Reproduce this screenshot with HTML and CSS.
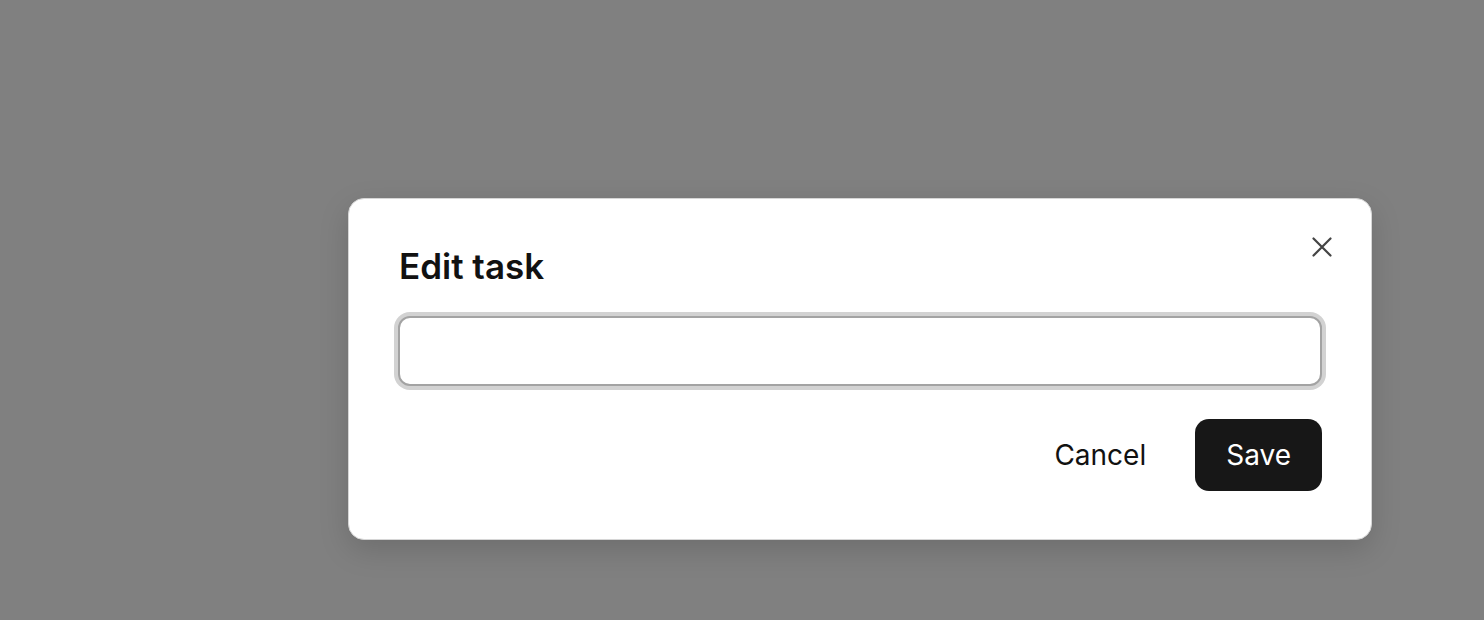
FILE: index.html
```html
<!DOCTYPE html>
<html>
<head>
<meta charset="utf-8">
<link rel="stylesheet" href="styles.css">
</head>
<body>
<div class="backdrop">
  <div class="dialog">
    <button class="close" aria-label="Close">
      <svg width="20" height="20" viewBox="0 0 20 20" fill="none" stroke="#444" stroke-width="2.2" stroke-linecap="round"><path d="M1.5 1.5 L18.5 18.5 M18.5 1.5 L1.5 18.5"/></svg>
    </button>
    <h2 class="title">Edit task</h2>
    <input class="field" type="text">
    <div class="actions">
      <button class="btn btn-ghost">Cancel</button>
      <button class="btn btn-primary">Save</button>
    </div>
  </div>
</div>
</body>
</html>
```
FILE: styles.css
```css
html, body {
  margin: 0;
  height: 100%;
}
body {
  background: #808080;
  font-family: Inter, "Liberation Sans", sans-serif;
}
.backdrop {
  height: 100%;
  display: flex;
  padding-left: 348px;
  padding-top: 198px;
  box-sizing: border-box;
}
.dialog {
  position: relative;
  width: 1024px;
  height: 342px;
  box-sizing: border-box;
  background: #fff;
  border: 1px solid #d6d6d6;
  border-radius: 16px;
  padding: 47px 49px 48px;
  box-shadow: 0 10px 30px rgba(0,0,0,0.15);
  display: flex;
  flex-direction: column;
}
.close {
  position: absolute;
  top: 38px;
  right: 39px;
  width: 20px;
  height: 20px;
  padding: 0;
  border: 0;
  background: none;
  display: flex;
}
.title {
  margin: 0 0 30px 1px;
  font-size: 35px;
  font-weight: 600;
  line-height: 40px;
  color: #111;
}
.field {
  box-sizing: border-box;
  width: 924px;
  height: 70px;
  border: 2px solid #a3a3a3;
  border-radius: 12px;
  box-shadow: 0 0 0 4px #d2d2d2;
  outline: none;
  font: inherit;
  font-size: 24px;
  padding: 0 16px;
  background: #fff;
}
.actions {
  margin-top: 33px;
  display: flex;
  justify-content: flex-end;
  gap: 18px;
}
.btn {
  height: 72px;
  padding: 0 31px;
  border: 0;
  border-radius: 14px;
  font-family: inherit;
  font-size: 28px;
  font-weight: 400;
}
.btn-ghost {
  background: transparent;
  color: #111;
}
.btn-primary {
  background: #171717;
  color: #fff;
}
```
